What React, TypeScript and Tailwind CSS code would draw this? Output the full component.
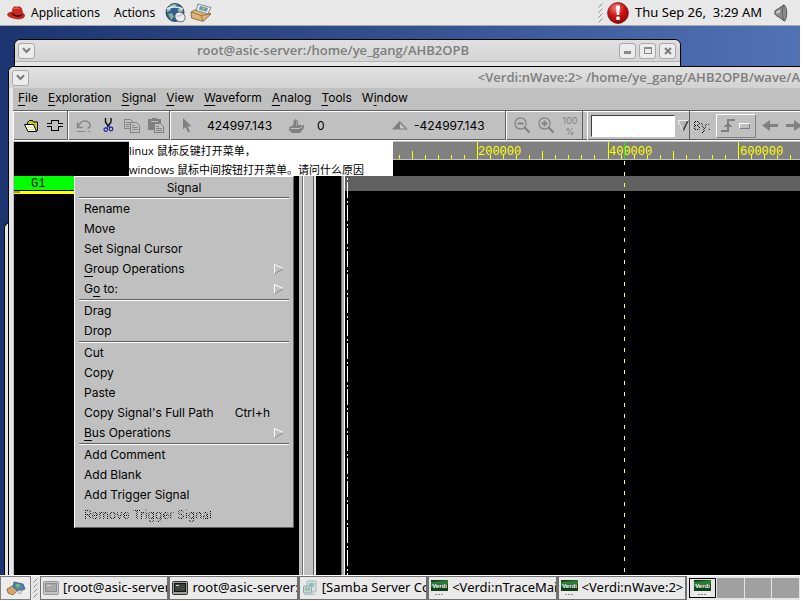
import { useState } from "react";
import type { ReactNode } from "react";

const menus = [
  ["", "F", "ile"],
  ["", "E", "xploration"],
  ["", "S", "ignal"],
  ["", "V", "iew"],
  ["", "W", "aveform"],
  ["", "A", "nalog"],
  ["", "T", "ools"],
  ["W", "i", "ndow"],
];

type MenuEntry = {
  label: string[];
  shortcut?: string;
  submenu?: boolean;
  disabled?: boolean;
};

const signalMenu: MenuEntry[][] = [
  [
    { label: ["Rename"] },
    { label: ["Move"] },
    { label: ["Set Signal Cursor"] },
    { label: ["", "G", "roup Operations"], submenu: true },
    { label: ["G", "o", " to:"], submenu: true },
  ],
  [{ label: ["Drag"] }, { label: ["Drop"] }],
  [
    { label: ["Cut"] },
    { label: ["Copy"] },
    { label: ["Paste"] },
    { label: ["Copy Signal's Full Path"], shortcut: "Ctrl+h" },
    { label: ["", "B", "us Operations"], submenu: true },
  ],
  [
    { label: ["Add Comment"] },
    { label: ["Add Blank"] },
    { label: ["Add Trigger Signal"] },
    { label: ["Remove Trigger Signal"], disabled: true },
  ],
];

const Mnemonic = ({ parts }: { parts: string[] }) => (
  <>
    {parts[0]}
    {parts[1] && (
      <span className="underline decoration-1 underline-offset-[3px]">{parts[1]}</span>
    )}
    {parts[2]}
  </>
);

/* ---------- icons ---------- */

const RedHat = () => (
  <svg width="18" height="14" viewBox="0 0 18 14">
    <path d="M0.5 8.5C1 6 4 6.5 5 6.5L6 2.2C7 0.2 9 1 10 1C12 0.6 14 1 14.6 2.6L15.6 7C17.6 8 18 9.6 17 11C15 13.6 9 13.4 5 11.8C2.6 11 0.6 10 0.5 8.5Z" fill="#d3281d" stroke="#8a120c" strokeWidth="0.6" />
    <path d="M5 6.8C8 9.8 12 10 15.5 8L15.4 9.4C12 11.6 7 10.8 4.6 8.2Z" fill="#2a0503" />
    <path d="M7 2.6C8.6 1.6 11 2 12 2.6" stroke="#f17b6d" fill="none" />
  </svg>
);

const Globe = () => (
  <svg width="21" height="20" viewBox="0 0 21 20">
    <circle cx="10" cy="9.5" r="9" fill="#2f5f96" stroke="#1c2f4c" strokeWidth="0.8" />
    <path d="M2 7C4 2 8 1 12 1.4L10 4L6 5L5 8L2 9ZM13 6L17 5L18 8L15 10L13 8Z" fill="#9cc7a4" />
    <path d="M3 11L7 10L9 14L6 17Z" fill="#7fb28c" />
    <path d="M2 6C6 3.4 13 3.4 18 6" stroke="#dfe9f3" strokeWidth="1.6" fill="none" />
    <ellipse cx="15" cy="14" rx="5.4" ry="4.6" transform="rotate(35 15 14)" fill="#ececf0" stroke="#55555d" strokeWidth="0.8" />
    <path d="M11.5 13C14 13.6 17 12 17.6 10.4" stroke="#8a8a92" strokeWidth="0.7" fill="none" />
  </svg>
);

const MailStack = () => (
  <svg width="22" height="20" viewBox="0 0 22 20">
    <path d="M1 9L9 5L21 11L13 18.5L1.5 15Z" fill="#dcb478" stroke="#7c5a2a" strokeWidth="0.8" />
    <path d="M1 9L11 12.5L21 11M11 12.5L13 18" stroke="#8e6a36" strokeWidth="0.8" fill="none" />
    <path d="M8 1L21 4.5L18 11L6 7.5Z" fill="#e6eaf0" stroke="#6c7480" strokeWidth="0.8" />
    <path d="M10 3L18 5L16.6 8.8L9 6.8Z" fill="#5f98b8" />
    <circle cx="13.4" cy="6" r="1.8" fill="#99b96d" />
  </svg>
);

const Alert = () => (
  <svg width="22" height="22" viewBox="0 0 22 22">
    <defs>
      <radialGradient id="alert" cx="0.4" cy="0.25" r="0.8">
        <stop offset="0" stopColor="#f08080" />
        <stop offset="0.5" stopColor="#cc1414" />
        <stop offset="1" stopColor="#8a0606" />
      </radialGradient>
    </defs>
    <circle cx="11" cy="11" r="10.4" fill="url(#alert)" stroke="#7a1010" strokeWidth="0.8" />
    <path d="M9 3.5H13L12.2 13H9.8Z" fill="#fff" />
    <rect x="9.2" y="14.5" width="3.6" height="3.6" rx="1" fill="#fff" />
  </svg>
);

const Speaker = () => (
  <svg width="14" height="18" viewBox="0 0 14 18">
    <path d="M0.6 8.5C0.6 6.5 2 6 4.5 4.6L10 0.8C13.4 3 13.6 14 10.5 17.2L4.5 12.8C2 11.6 0.6 10.6 0.6 8.5Z" fill="#8b8b8b" stroke="#4a4a4a" strokeWidth="0.9" />
    <path d="M10 1C7.6 5 7.8 13 10.5 17" stroke="#555" strokeWidth="0.8" fill="none" />
    <path d="M2 8L6 5.4V9L2 9.6Z" fill="#c9c9c9" />
  </svg>
);

const Chevron = () => (
  <svg width="9" height="7" viewBox="0 0 9 7">
    <path d="M1 1.2L4.5 5L8 1.2" stroke="#7c7c7c" strokeWidth="2" fill="none" />
  </svg>
);

const FolderIcon = () => (
  <svg width="15" height="14" viewBox="0 0 15 14">
    <path d="M3.5 6.5V3.5L5.5 1.5H8.5L9.5 3H13.5V11.5L12 12Z" fill="#c8c828" stroke="#000" />
    <path d="M0.5 5.5H9.5L12.5 12.5H4Z" fill="#fffff0" stroke="#000" />
    <path d="M3 8.5H9M4 10.5H10" stroke="#e8e888" />
  </svg>
);

const ConnectIcon = () => (
  <svg width="17" height="13" viewBox="0 0 17 13" shapeRendering="crispEdges">
    <path d="M0 4.5H4.5V1.5H11.5V4.5H16M0 7.5H4.5V11.5H11.5V7.5H16" stroke="#000" fill="none" />
  </svg>
);

const UndoIcon = () => (
  <svg width="16" height="14" viewBox="0 0 16 14">
    <path d="M2 8C4 2.4 8 1.4 11 2.4C15 4 15 8 11.5 9.5M1.5 3.5V8.5H7" stroke="#858585" strokeWidth="1.4" fill="none" />
    <path d="M1 12.5H9M10 12.5H11M12 12.5H13M14 12.5H15" stroke="#858585" />
  </svg>
);

const ScissorsIcon = () => (
  <svg width="11" height="15" viewBox="0 0 11 15">
    <path d="M2.5 0V4L5.2 8M8 0V4L5.2 8" stroke="#111" strokeWidth="1.4" fill="none" />
    <circle cx="2.8" cy="11.6" r="1.8" stroke="#2020a0" strokeWidth="1.2" fill="none" />
    <circle cx="8" cy="11" r="1.8" stroke="#2020a0" strokeWidth="1.2" fill="none" />
    <path d="M5.2 7.5L4 10M5.4 7.5L7 9.6" stroke="#2020a0" strokeWidth="1.2" />
  </svg>
);

const CopyIcon = () => (
  <svg width="16" height="14" viewBox="0 0 16 14" shapeRendering="crispEdges">
    <path d="M0.5 0.5H6.5L8.5 2.5V9.5H0.5Z" stroke="#858585" fill="#c0c0c0" />
    <path d="M2 3.5H6M2 5.5H6M2 7.5H5" stroke="#858585" />
    <path d="M6.5 3.5H12.5L15.5 6.5V13.5H6.5Z" stroke="#858585" fill="#c0c0c0" />
    <path d="M8 6.5H11M8 8.5H14M8 10.5H14" stroke="#858585" />
  </svg>
);

const PasteIcon = () => (
  <svg width="16" height="15" viewBox="0 0 16 15" shapeRendering="crispEdges">
    <path d="M0 1H4V0H9V1H13V12H0Z" fill="#808080" />
    <path d="M3 3H10" stroke="#c0c0c0" />
    <path d="M6.5 5.5H12.5L15.5 8.5V14.5H6.5Z" stroke="#808080" fill="#c0c0c0" />
    <path d="M8 8.5H11M8 10.5H14M8 12.5H14" stroke="#858585" />
  </svg>
);

const PointerIcon = () => (
  <svg width="10" height="15" viewBox="0 0 10 15">
    <path d="M1 0V11.5L3.6 9L6 14.5L8 13.5L5.6 8.2H9.5Z" fill="#808080" />
  </svg>
);

const StampIcon = () => (
  <svg width="16" height="14" viewBox="0 0 16 14">
    <path d="M0 8.5L4 6H15V9L11 14H3L0 11Z" fill="#808080" />
    <path d="M1.5 9.5H10.5L14 6.5" stroke="#c0c0c0" fill="none" />
    <path d="M4.5 8V2L6.5 0L9 2V8Z" fill="#808080" />
    <path d="M7.5 2V7" stroke="#a8a8a8" />
  </svg>
);

const DeltaIcon = () => (
  <svg width="16" height="9" viewBox="0 0 16 9">
    <path d="M7.5 0L0 8.5H16Z" fill="#808080" />
    <path d="M8 2.5L13 7.5H8Z" fill="#c8c8c8" />
  </svg>
);

const ZoomIcon = ({ plus }: { plus?: boolean }) => (
  <svg width="17" height="17" viewBox="0 0 17 17">
    <circle cx="6.5" cy="6.5" r="5.6" stroke="#808080" strokeWidth="1.2" fill="none" />
    <path d="M10.5 10.5L15.5 15.5" stroke="#808080" strokeWidth="2.2" />
    <path d="M3.5 6.5H9.5" stroke="#808080" strokeWidth="1.8" />
    {plus && <path d="M6.5 3.5V9.5" stroke="#808080" strokeWidth="1.8" />}
  </svg>
);

const EdgeIcon = () => (
  <svg width="30" height="15" viewBox="0 0 30 15" shapeRendering="crispEdges">
    <path d="M0 13H7V2H14" stroke="#808080" strokeWidth="2" fill="none" />
    <path d="M7 4L3 8.5H11Z" fill="#808080" />
    <path d="M18.5 10V5.5H28.5" stroke="#fff" fill="none" />
    <path d="M18.5 10.5H28.5V5.5" stroke="#808080" fill="none" />
  </svg>
);

const Arrow = ({ right }: { right?: boolean }) => (
  <svg width="16" height="11" viewBox="0 0 16 11">
    <path d={right ? "M16 5.5L8 0V4H0V7H8V11Z" : "M0 5.5L8 0V4H16V7H8V11Z"} fill="#808080" />
  </svg>
);

const SubmenuArrow = () => (
  <svg width="10" height="10" viewBox="0 0 10 10">
    <path d="M0.5 9.5V0.5L9 4.5" stroke="#fff" fill="none" />
    <path d="M1 9.5L9 5" stroke="#6a6a6a" strokeDasharray="1.5 1" fill="none" />
  </svg>
);

const TerminalIcon = ({ dim }: { dim?: boolean }) => (
  <svg width="16" height="14" viewBox="0 0 16 14">
    <rect x="0.5" y="0.5" width="15" height="13" rx="1" fill={dim ? "#c4c4c4" : "#a2a29c"} stroke={dim ? "#999" : "#333"} />
    <rect x="2.5" y="2.5" width="11" height="8" fill={dim ? "#a9a9a9" : "#3c463c"} stroke={dim ? "#8f8f8f" : "#111"} />
    <path d="M4 4.5H7" stroke={dim ? "#ddd" : "#cfd8cf"} />
  </svg>
);

const SambaIcon = () => (
  <svg width="16" height="16" viewBox="0 0 16 16">
    <rect x="5" y="1" width="9" height="11" rx="1" fill="#d4e3dc" stroke="#9fb5ab" />
    <rect x="7" y="3" width="5" height="4" fill="#8fc0b9" />
    <rect x="1.5" y="6" width="8" height="7" rx="1" fill="#c9d8e2" stroke="#93a6b4" />
    <rect x="3" y="7.5" width="5" height="3.5" fill="#9cc79d" />
    <path d="M2 14.5H13" stroke="#b7bfc4" />
  </svg>
);

const VerdiIcon = () => (
  <svg width="17" height="17" viewBox="0 0 17 17">
    <rect width="17" height="11" fill="#12401a" />
    <path d="M0 2L17 0V4L0 7Z" fill="#2c7a34" />
    <text x="8.5" y="8" fontSize="6" fontWeight="700" fill="#fff" textAnchor="middle" fontFamily="Liberation Sans, sans-serif">
      Verdi
    </text>
    <rect y="11" width="17" height="6" fill="#e9ece9" />
    <path d="M4 14.5H13" stroke="#8a8a8a" strokeDasharray="2 1" />
  </svg>
);

const ToolsIcon = () => (
  <svg width="20" height="15" viewBox="0 0 20 15">
    <path d="M1 8L8 4L13 8L7 14L2 12Z" fill="#d3a566" stroke="#6e5026" strokeWidth="0.7" />
    <path d="M8 1L17 3L19 8L12 10L7 6Z" fill="#4f87b0" stroke="#2b4a66" strokeWidth="0.7" />
    <path d="M10 3L14 3L13 7L10 6Z" fill="#7cb36c" />
    <path d="M10 10L17 9L14 13Z" fill="#e4e4e4" stroke="#777" strokeWidth="0.6" />
  </svg>
);

const Grip = () => (
  <svg width="5" height="20" viewBox="0 0 5 20" className="shrink-0">
    {[0, 5, 10, 15].map((y) => (
      <path key={y} d={`M0.5 ${y + 4.5}L4.5 ${y + 0.5}`} stroke="#8e8e8e" />
    ))}
  </svg>
);

/* ---------- window chrome ---------- */

const FrameButton = ({ label, children }: { label: string; children: ReactNode }) => (
  <button
    aria-label={label}
    className="flex h-4 w-[17px] shrink-0 items-center justify-center rounded-[3px] border border-[#a8a8a8] bg-[#ececec]"
  >
    {children}
  </button>
);

const ToolButton = ({ label, children }: { label: string; children: ReactNode }) => (
  <button aria-label={label} className="flex h-6 w-6 shrink-0 items-center justify-center">
    {children}
  </button>
);

const group = "flex h-full shrink-0 items-center border-l border-r border-l-white border-r-[#606060]";

/* ---------- time ruler ---------- */

const rulerLabels = ["200000", "400000", "600000"];
const ticks = Array.from({ length: 36 }, (_, i) => i);

const Ruler = () => (
  <svg width="100%" height="18" className="block border-b border-[#c0c0c0] bg-[#808080]" shapeRendering="crispEdges">
    {ticks.map((i) => {
      const x = Math.floor(2 + i * 13.05);
      const h = i % 10 === 0 ? 17 : i % 5 === 0 ? 8 : 4;
      return <rect key={i} x={x} y={17 - h} width="1" height={h} fill="#ffff00" />;
    })}
    {rulerLabels.map((label, i) => (
      <text key={label} x={133 + i * 131} y="13" fontSize="12" fill="#ffff00" fontFamily="Liberation Mono, monospace">
        {label}
      </text>
    ))}
    <rect x="279" y="0" width="1" height="17" fill="#00ff00" />
  </svg>
);

const SignalMenu = () => (
  <div
    role="menu"
    aria-label="Signal"
    className="absolute top-[35px] left-[61px] w-[220px] border border-t-white border-r-[#606060] border-b-[#606060] border-l-white bg-[#c0c0c0] px-1 pb-0.5"
  >
    <div className="h-5 text-center leading-[22px]">Signal</div>
    {signalMenu.map((section) => (
      <div key={section[0].label.join("")} className="border-t border-[#606060]">
        <div className="border-t border-white">
          {section.map((item) => (
            <button
              key={item.label.join("")}
              role="menuitem"
              disabled={item.disabled}
              className="flex h-5 w-full items-center pr-[5px] pl-[5px] text-left whitespace-pre"
            >
              {item.disabled ? (
                <span className="bg-[repeating-conic-gradient(#000_0_25%,#c0c0c0_0_50%)] bg-[length:2px_2px] bg-clip-text text-transparent">
                  {item.label[0]}
                </span>
              ) : (
                <span>
                  <Mnemonic parts={item.label} />
                </span>
              )}
              {item.shortcut && <span className="ml-auto pr-3.5">{item.shortcut}</span>}
              {item.submenu && (
                <span className="ml-auto">
                  <SubmenuArrow />
                </span>
              )}
            </button>
          ))}
        </div>
      </div>
    ))}
  </div>
);

const WaveWindow = () => {
  const [query, setQuery] = useState("");

  return (
    <section className="absolute top-10 right-0 bottom-0 left-2 flex flex-col overflow-hidden rounded-tl-md border-t border-l border-black bg-[#e6e6e6]">
      <header className="flex h-[21px] shrink-0 items-center justify-between bg-linear-to-b from-[#e2e2e2] to-[#d2d2d2] pl-[3px]">
        <FrameButton label="Window menu">
          <Chevron />
        </FrameButton>
        <h2 className="shrink-0 font-['Open_Sans'] text-[13px] font-semibold whitespace-nowrap text-[#7d7d7d]">
          &lt;Verdi:nWave:2&gt; /home/ye_gang/AHB2OPB/wave/A
        </h2>
      </header>

      <div className="ml-1 flex min-h-0 flex-1 flex-col bg-[#c0c0c0] font-['Inter'] text-[12px] text-black">
        <nav className="flex h-[22px] shrink-0 items-center gap-2.5 px-[5px] pb-0.5">
          {menus.map((m) => (
            <button key={m.join("")}>
              <Mnemonic parts={m} />
            </button>
          ))}
        </nav>

        <div className="flex h-[31px] shrink-0 items-center overflow-hidden border-t border-b border-t-[#606060] border-b-white shadow-[inset_0_1px_0_#fff,inset_0_-1px_0_#606060]">
          <div className={`${group} w-[55px] pl-[5px]`}>
            <ToolButton label="Open"><FolderIcon /></ToolButton>
            <ToolButton label="Get signals"><ConnectIcon /></ToolButton>
          </div>
          <div className={`${group} w-[102px] pl-[3px]`}>
            <ToolButton label="Undo"><UndoIcon /></ToolButton>
            <ToolButton label="Cut"><ScissorsIcon /></ToolButton>
            <ToolButton label="Copy"><CopyIcon /></ToolButton>
            <ToolButton label="Paste"><PasteIcon /></ToolButton>
          </div>
          <div className={`${group} w-[336px] pl-1`}>
            <ToolButton label="Cursor"><PointerIcon /></ToolButton>
            <span className="w-[86px] pl-2">424997.143</span>
            <ToolButton label="Marker"><StampIcon /></ToolButton>
            <span className="w-[79px] pl-2">0</span>
            <ToolButton label="Delta"><DeltaIcon /></ToolButton>
            <span className="pl-0.5">-424997.143</span>
          </div>
          <div className={`${group} w-[77px] pl-[3px]`}>
            <ToolButton label="Zoom out"><ZoomIcon /></ToolButton>
            <ToolButton label="Zoom in"><ZoomIcon plus /></ToolButton>
            <button aria-label="Zoom all" className="flex w-6 flex-col items-center text-[9px] leading-[11px] text-[#808080]">
              <span>100</span>
              <span>%</span>
            </button>
          </div>
          <div className={`${group} ml-1 w-[103px] pl-[3px]`}>
            <input
              aria-label="Search value"
              value={query}
              onChange={(e) => setQuery(e.target.value)}
              className="h-[22px] w-[84px] border border-t-[#404040] border-r-white border-b-white border-l-[#404040] bg-white px-1 outline-none"
            />
            <button aria-label="Search history" className="pl-0.5">
              <svg width="13" height="13" viewBox="0 0 13 13">
                <path d="M1 1.5H11L6 12Z" fill="#b4b4b4" />
                <path d="M11 1.5L6 12" stroke="#404040" strokeWidth="1.6" />
                <path d="M6 12L1 1.5H11" stroke="#eee" fill="none" />
              </svg>
            </button>
          </div>
          <span className="w-[26px] shrink-0 bg-[repeating-conic-gradient(#000_0_25%,#c0c0c0_0_50%)] bg-[length:2px_2px] bg-clip-text pl-[3px] text-transparent">
            By:
          </span>
          <button
            aria-label="Search by edge"
            className="flex h-6 w-10 shrink-0 items-center justify-center border border-t-white border-r-[#808080] border-b-[#808080] border-l-white"
          >
            <EdgeIcon />
          </button>
          <button aria-label="Previous" className="ml-1.5 shrink-0"><Arrow /></button>
          <button aria-label="Next" className="ml-2 shrink-0"><Arrow right /></button>
        </div>

        <div className="relative flex min-h-0 flex-1 pt-px pl-px">
          {/* signal list */}
          <div className="w-[285px] shrink-0 bg-black pt-[34px]">
            <div className="h-3.5 w-[60px] bg-[#00ff00] pl-[17px] font-['Liberation_Mono'] text-[12px] leading-4">
              G1
            </div>
            <div className="mt-px h-[3px] w-[60px] bg-[#ffff00]">
              <div className="h-0.5 w-1.5 bg-[#a0a020]" />
            </div>
          </div>
          <div className="flex w-[17px] shrink-0">
            <div className="w-1 border-r border-[#707070] bg-[#c0c0c0]" />
            <div className="flex-1 border-r border-l border-l-white border-r-[#606060] bg-[#c0c0c0]" />
            <div className="w-0.5 bg-[#e4e4e4]" />
          </div>
          {/* value list */}
          <div className="w-[25px] shrink-0 bg-black" />
          <div className="w-1 shrink-0 border-r border-l border-l-[#707070] border-r-white bg-[#b0b0b0]" />
          {/* waveform */}
          <div className="relative min-w-0 flex-1 bg-black">
            <Ruler />
            <div className="mt-4 h-[15px] bg-[#606060]" />
            <div className="absolute top-9 bottom-0 left-0.5 w-px bg-[repeating-linear-gradient(to_bottom,#fff_0_2px,transparent_2px_4px,#fff_4px_20px,transparent_20px_23px)]" />
            <div className="absolute top-[19px] bottom-0 left-[279px] w-px bg-[repeating-linear-gradient(to_bottom,#ffff40_0_4px,transparent_4px_11px)]" />
          </div>

          {/* note pinned over the panes */}
          <p className="absolute top-0 left-[116px] h-[35px] w-[264px] bg-white font-['Open_Sans','Noto_Sans_CJK_SC',sans-serif] text-[11px] leading-[19px] whitespace-nowrap">
            linux 鼠标反键打开菜单，
            <br />
            windows 鼠标中间按钮打开菜单。请问什么原因
          </p>
          <SignalMenu />
        </div>
      </div>
    </section>
  );
};

const TerminalWindow = () => (
  <section className="absolute top-[13px] left-3.5 h-40 w-[667px] rounded-t-md border border-black bg-[#e6e6e6]">
    <header className="flex h-[22px] items-center gap-[3px] rounded-t-md border-b border-[#b4b4b4] bg-linear-to-b from-[#e0e0e0] to-[#d4d4d4] pr-1 pl-[3px]">
      <FrameButton label="Window menu">
        <Chevron />
      </FrameButton>
      <h2 className="flex-1 pl-3 text-center font-['Open_Sans'] text-[13px] font-semibold text-[#7d7d7d]">
        root@asic-server:/home/ye_gang/AHB2OPB
      </h2>
      <FrameButton label="Minimize">
        <span className="mt-1 h-[3px] w-[7px] bg-[#8a8a8a]" />
      </FrameButton>
      <FrameButton label="Maximize">
        <span className="h-[7px] w-2 border border-t-2 border-[#8a8a8a]" />
      </FrameButton>
      <FrameButton label="Close">
        <svg width="8" height="8" viewBox="0 0 8 8">
          <path d="M1 1L7 7M7 1L1 7" stroke="#7c7c7c" strokeWidth="2" />
        </svg>
      </FrameButton>
    </header>
  </section>
);

const tasks = [
  { title: "[root@asic-server", icon: <TerminalIcon dim /> },
  { title: "root@asic-server:", icon: <TerminalIcon /> },
  { title: "[Samba Server Co", icon: <SambaIcon /> },
  { title: "<Verdi:nTraceMai", icon: <VerdiIcon /> },
  { title: "<Verdi:nWave:2>", icon: <VerdiIcon /> },
];

const App = () => (
  <div className="h-screen bg-white pr-[3px] pb-px">
    <div className="flex h-full flex-col overflow-hidden bg-[#e6e6e6] font-['Noto_Sans'] text-[13px] text-black">
      <div className="flex h-[26px] shrink-0 items-center border-b border-[#a9a9a9] bg-[#e8e8e8] pr-3 pl-[7px]">
        <button className="flex items-center gap-1.5 text-[12px]">
          <RedHat />
          Applications
        </button>
        <button className="ml-3.5 text-[12px]">Actions</button>
        <button aria-label="Web browser" className="ml-2.5"><Globe /></button>
        <button aria-label="Email" className="ml-1"><MailStack /></button>
        <div className="ml-auto flex items-center">
          <Grip />
          <button aria-label="Updates" className="mr-1.5 ml-1"><Alert /></button>
          <span className="whitespace-pre">Thu Sep 26,  3:29 AM</span>
          <button aria-label="Volume" className="ml-3"><Speaker /></button>
        </div>
      </div>

      <main className="relative min-h-0 flex-1 overflow-hidden bg-linear-to-r from-[#1c3570] via-[#35508f] via-50% to-[#5272b6]">
        <TerminalWindow />
        <section className="absolute top-[196px] bottom-0 left-1 w-10 rounded-tl-md border-t border-l border-black bg-[#e6e6e6]" />
        <WaveWindow />
      </main>

      <footer className="flex h-[25px] shrink-0 items-stretch border-t border-white pr-px">
        <button aria-label="Show desktop" className="flex w-[31px] shrink-0 items-center justify-center border border-[#808080] bg-[#ececec]">
          <ToolsIcon />
        </button>
        <div className="flex w-[9px] shrink-0 items-center justify-center">
          <Grip />
        </div>
        <div className="grid min-w-0 flex-1 grid-cols-5">
          {tasks.map((task) => (
            <button
              key={task.title}
              className="flex min-w-0 items-center gap-1 overflow-hidden border border-r-2 border-[#707070] bg-[#e9e9e9] pl-0.5 text-left whitespace-nowrap"
            >
              <span className="shrink-0">{task.icon}</span>
              <span className="min-w-0 overflow-hidden">{task.title}</span>
            </button>
          ))}
        </div>
        <div className="ml-0.5 grid w-[110px] shrink-0 grid-cols-4 gap-px py-0.5">
          <button aria-label="Workspace 1" className="flex items-center justify-center border border-black bg-[#e6e6e6]">
            <VerdiIcon />
          </button>
          <button aria-label="Workspace 2" className="bg-[#a0a0a0]" />
          <button aria-label="Workspace 3" className="bg-[#a0a0a0]" />
          <button aria-label="Workspace 4" className="bg-[#a0a0a0]" />
        </div>
      </footer>
    </div>
  </div>
);

export default App;
